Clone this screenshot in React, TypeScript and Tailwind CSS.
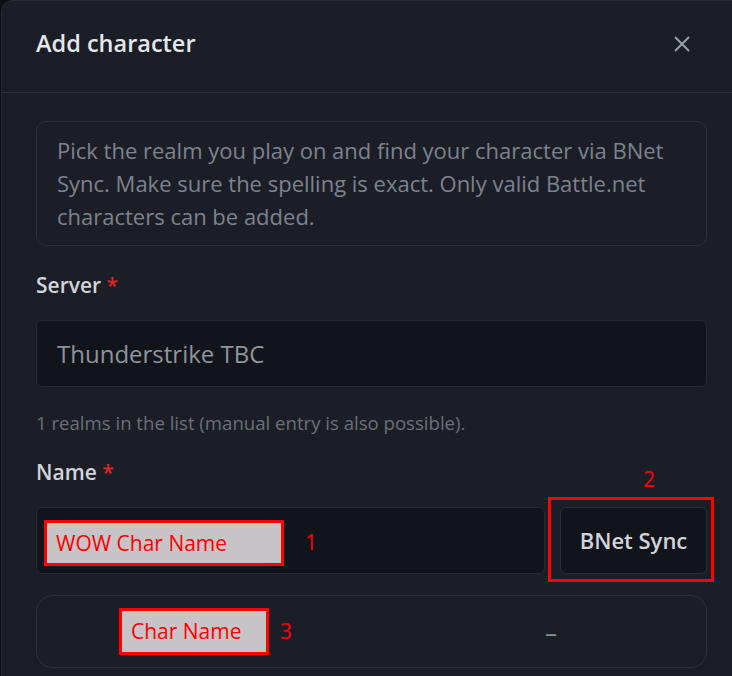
const font = { fontFamily: '"Open Sans", "Noto Sans", sans-serif' };

function Annotation({ label, className }: { label: string; className: string }) {
  return (
    <div className={`flex shrink-0 items-center border-[3px] border-[#ff0000] bg-[#c8c3c6] pl-[9px] text-[21px] leading-none text-[#ff0000] ${className}`}>
      {label}
    </div>
  );
}

export default function App() {
  return (
    <div className="h-[676px] overflow-hidden bg-[#0e0f13] pl-px" style={font}>
      <div className="h-[700px] w-[760px] rounded-tl-xl border-l border-t border-[#262932] bg-[#1b1e26]">
        <header className="flex h-[92px] items-center justify-between border-b border-[#2c303a] pb-[6px] pl-[34px] pr-[71px]">
          <h2 className="text-[23.5px] font-semibold text-[#e5e7eb]">Add character</h2>
          <button className="text-[#9ca3af]" aria-label="Close">
            <svg width="16" height="16" viewBox="0 0 16 16" fill="none" stroke="currentColor" strokeWidth="1.8" strokeLinecap="round">
              <path d="M1.5 1.5l13 13M14.5 1.5l-13 13" />
            </svg>
          </button>
        </header>

        <div className="w-[705px] pl-[34px]">
          <div className="mt-7 rounded-[10px] border border-[#2c303a] px-5 py-3 text-[22px] leading-[33px] text-[#7d838e]">
            Pick the realm you play on and find your character via BNet Sync. Make sure the spelling is exact. Only valid Battle.net characters can be added.
          </div>

          <label className="mt-[25px] block text-[21px] font-semibold leading-[28px] text-[#d1d5db]">
            Server <span className="text-[#dc2626]">*</span>
          </label>
          <div className="mt-[21px] flex h-[67px] items-center rounded-md border border-[#262a33] bg-[#12141b] px-5 text-[24px] text-[#8f949d]">
            Thunderstrike TBC
          </div>
          <p className="mt-[24px] text-[18.6px] leading-6 text-[#6b7079]">
            1 realms in the list (manual entry is also possible).
          </p>

          <label className="mt-[23px] block text-[21px] font-semibold leading-[28px] text-[#d1d5db]">
            Name <span className="text-[#dc2626]">*</span>
          </label>
          <div className="relative mt-[21px] flex gap-[15px]">
            <div className="flex h-[67px] flex-1 items-center gap-[21px] rounded-md border border-[#262a33] bg-[#12141b] pl-[7px] pt-[5px]">
              <Annotation label="WOW Char Name" className="h-[46px] w-[240px]" />
              <span className="text-[21px] text-[#ff0000]">1</span>
            </div>
            <button className="h-[67px] w-[147px] rounded-md border border-[#2a2e38] bg-[#12141b] text-[22px] font-semibold text-[#d1d5db]">
              BNet Sync
            </button>
            <div className="pointer-events-none absolute right-[-7px] top-[-10px] h-[85px] w-[166px] border-[3px] border-[#ff0000]" />
            <span className="absolute right-[52px] top-[-38px] text-[21px] leading-none text-[#ff0000]">2</span>
          </div>

          <div className="mt-[21px] flex h-[73px] items-center gap-[11px] rounded-2xl border border-[#2c303a] pl-[82px] pr-[149px]">
            <Annotation label="Char Name" className="h-[47px] w-[150px]" />
            <span className="text-[21px] text-[#ff0000]">3</span>
            <span className="ml-auto pt-[3px] text-[24px] text-[#8b9099]">–</span>
          </div>
        </div>
      </div>
    </div>
  );
}
